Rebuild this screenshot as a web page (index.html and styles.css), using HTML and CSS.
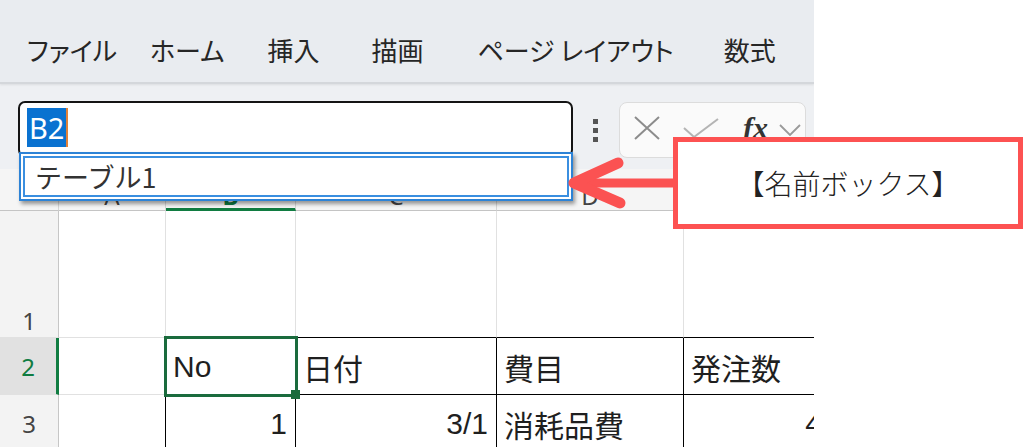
FILE: index.html
```html
<!DOCTYPE html>
<html lang="ja">
<head>
	<meta charset="UTF-8">
	<title>名前ボックス</title>
	<link rel="stylesheet" href="styles.css">
</head>
<body>
	<div class="page">
		<div class="excel">
			<nav class="tabs">
				<span>ファイル</span>
				<span>ホーム</span>
				<span>挿入</span>
				<span>描画</span>
				<span>ページ レイアウト</span>
				<span>数式</span>
			</nav>
			<div class="fbar">
				<div class="namebox"><span class="sel">B2</span><span class="caret"></span></div>
				<div class="dots"><i></i><i></i><i></i></div>
				<div class="fxgroup">
					<svg class="ic-x" width="28" height="24" viewBox="0 0 28 24"><path d="M2 1 L26 23 M26 1 L2 23" stroke="#8c8c8c" stroke-width="2" fill="none"/></svg>
					<svg class="ic-ok" width="36" height="20" viewBox="0 0 36 20"><path d="M1 10 L11 19 L35 1" stroke="#b4b4b4" stroke-width="2" fill="none"/></svg>
					<span class="fx">fx</span>
					<svg class="ic-chev" width="22" height="12" viewBox="0 0 22 12"><path d="M1 1 L11 11 L21 1" stroke="#9a9a9a" stroke-width="1.8" fill="none"/></svg>
				</div>
			</div>
			<div class="sheet">
				<div class="hd"></div>
				<div class="hd">A</div>
				<div class="hd hd-on">B</div>
				<div class="hd">C</div>
				<div class="hd">D</div>
				<div class="hd">E</div>

				<div class="rh rh1">1</div>
				<div class="c"></div>
				<div class="c top"></div>
				<div class="c top"></div>
				<div class="c top"></div>
				<div class="c top"></div>

				<div class="rh rh-on">2</div>
				<div class="c lft"></div>
				<div class="c t cur">No</div>
				<div class="c t">日付</div>
				<div class="c t">費目</div>
				<div class="c t">発注数</div>

				<div class="rh">3</div>
				<div class="c lft"></div>
				<div class="c t num">1</div>
				<div class="c t num">3/1</div>
				<div class="c t">消耗品費</div>
				<div class="c t num">4</div>
			</div>
		</div>

		<div class="dropdown"><div class="item">テーブル1</div></div>

		<svg class="arrow" width="115" height="66" viewBox="0 0 115 66">
			<line x1="12" y1="33" x2="112" y2="33" stroke="#fb5252" stroke-width="9"/>
			<path d="M53 13 L9 33 L55 53" stroke="#fb5252" stroke-width="11" stroke-linecap="round" stroke-linejoin="round" fill="none"/>
		</svg>

		<div class="callout">【名前ボックス】</div>
	</div>
</body>
</html>
```

FILE: styles.css
```css
body {
	margin: 0;
	background: #fff;
	font-family: "Noto Sans CJK JP", sans-serif;
}
.page {
	position: relative;
	width: 1024px;
	height: 447px;
	overflow: hidden;
}
.excel {
	width: 814px;
	height: 447px;
	overflow: hidden;
	background: #fff;
}

/* ribbon tabs */
.tabs {
	position: relative;
	z-index: 1;
	display: flex;
	align-items: center;
	box-sizing: border-box;
	height: 84px;
	padding: 16px 0 0 27px;
	background: #e9ecf0;
	border-bottom: 2px solid #d4d7db;
	box-shadow: 0 1px 2px rgba(0,0,0,.08);
	color: #262626;
	font-size: 26px;
	font-feature-settings: "palt";
	white-space: nowrap;
}
.tabs span:nth-child(1) { margin-right: 33px; }
.tabs span:nth-child(2) { margin-right: 43px; }
.tabs span:nth-child(3) { margin-right: 52px; }
.tabs span:nth-child(4) { margin-right: 54px; }
.tabs span:nth-child(5) { margin-right: 50px; }

/* formula bar */
.fbar {
	display: flex;
	align-items: flex-start;
	box-sizing: border-box;
	height: 85px;
	padding: 17px 0 0 18px;
	background: #eef0f3;
}
.namebox {
	display: flex;
	align-items: flex-start;
	box-sizing: border-box;
	width: 555px;
	height: 56px;
	padding: 5px 0 0 7px;
	background: #fff;
	border: 2px solid #141414;
	border-radius: 7px;
}
.namebox .sel {
	padding: 0 2px;
	height: 39px;
	line-height: 39px;
	background: #0a72d0;
	color: #fff;
	font: 29px "Noto Sans", sans-serif;
}
.namebox .caret {
	width: 2px;
	height: 39px;
	background: #e0813a;
}
.dots {
	display: flex;
	flex-direction: column;
	gap: 4px;
	margin: 18px 0 0 20px;
}
.dots i {
	display: block;
	width: 5px;
	height: 5px;
	background: #555;
}
.fxgroup {
	display: flex;
	align-items: center;
	box-sizing: border-box;
	width: 187px;
	height: 56px;
	margin: 1px 0 0 21px;
	padding: 0 0 4px 13px;
	background: #fafafa;
	border: 1px solid #dcdcdc;
	border-radius: 8px;
}
.ic-ok {
	margin-left: 22px;
}
.fx {
	margin-left: 24px;
	color: #333;
	font: italic bold 30px "Liberation Serif", serif;
	line-height: 1;
}
.ic-chev {
	margin-left: 11px;
	margin-top: 4px;
}

/* sheet grid */
.sheet {
	display: grid;
	grid-template-columns: 59px 107px 130px 201px 187px 147px;
	grid-template-rows: 42px 127px 57px 57px;
}
.sheet > div {
	box-sizing: border-box;
	border-right: 1px solid #e1e1e1;
	border-bottom: 1px solid #e1e1e1;
}
.hd {
	display: flex;
	justify-content: center;
	align-items: flex-end;
	padding-bottom: 2px;
	background: #f5f5f5;
	border-right-color: #d6d6d6 !important;
	border-bottom-color: #c4c4c4 !important;
	color: #444;
	font: 24px "Noto Sans", sans-serif;
	line-height: 1;
}
.hd.hd-on {
	border-bottom: 3px solid #107c41 !important;
	padding-bottom: 0;
	color: #107c41;
	font-weight: bold;
}
.rh {
	display: flex;
	justify-content: center;
	align-items: center;
	background: #f3f3f3;
	border-right-color: #c6c6c6 !important;
	color: #444;
	font: 24px "Noto Sans", sans-serif;
}
.rh.rh1 {
	align-items: flex-end;
	padding-bottom: 0;
}
.rh.rh-on {
	background: #e1e1e1;
	border-right: 3px solid #107c41 !important;
	color: #107c41;
}
.c {
	display: flex;
	align-items: center;
	padding: 2px 8px 0 7px;
	background: #fff;
	color: #1f1f1f;
	font: 30px "Liberation Sans", "Noto Sans CJK JP", sans-serif;
	white-space: nowrap;
}
.c.num {
	justify-content: flex-end;
}
.c.top {
	border-bottom-color: #000;
}
.c.lft {
	border-right-color: #000;
}
.c.t {
	border-right-color: #000;
	border-bottom-color: #000;
}
.c.cur {
	position: relative;
	z-index: 1;
	outline: 3px solid #1a6b3d;
	outline-offset: -1px;
}
.c.cur::after {
	content: "";
	position: absolute;
	right: -5px;
	bottom: -5px;
	width: 9px;
	height: 9px;
	background: #1a6b3d;
}

/* name box dropdown */
.dropdown {
	position: absolute;
	top: 152px;
	left: 19px;
	z-index: 2;
	box-sizing: border-box;
	width: 554px;
	height: 49px;
	padding: 2px;
	background: #fff;
	border: 2px solid #2d83d6;
	box-shadow: 2px 3px 4px rgba(0,0,0,.4);
}
.dropdown .item {
	display: flex;
	align-items: center;
	box-sizing: border-box;
	height: 100%;
	padding-left: 10px;
	border: 2px solid #3b8fe0;
	color: #333;
	font-size: 27px;
}

/* annotation */
.arrow {
	position: absolute;
	top: 150px;
	left: 565px;
	z-index: 3;
}
.callout {
	position: absolute;
	top: 137px;
	left: 673px;
	z-index: 3;
	display: flex;
	justify-content: center;
	align-items: center;
	box-sizing: border-box;
	width: 350px;
	height: 92px;
	background: #fff;
	border: 5px solid #fd5252;
	color: #222;
	font-size: 28px;
	font-weight: 300;
}
```
